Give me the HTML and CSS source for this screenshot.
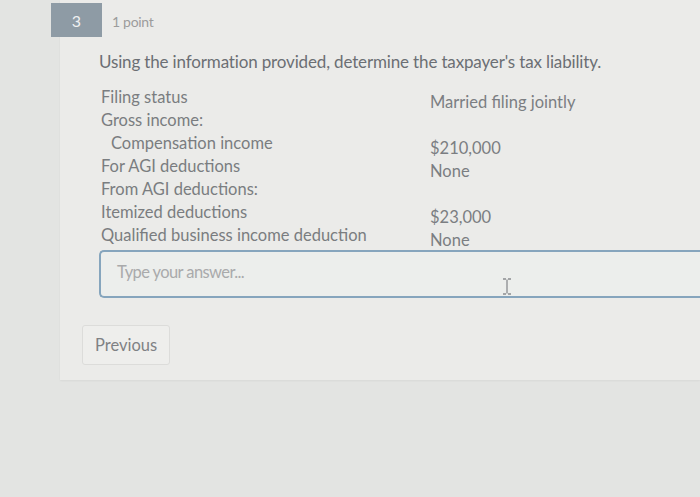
FILE: index.html
```html
<!DOCTYPE html>
<html lang="en">
<head>
<meta charset="utf-8">
<title>Question 3</title>
<link rel="stylesheet" href="styles.css">
</head>
<body>
<main class="card">
  <div class="header">
    <span class="badge">3</span>
    <span class="points">1 point</span>
  </div>
  <p class="prompt">Using the information provided, determine the taxpayer's tax liability.</p>
  <div class="details">
    <span class="label">Filing status</span><span class="value">Married filing jointly</span>
    <span class="label">Gross income:</span><span class="value"></span>
    <span class="label indent">Compensation income</span><span class="value">$210,000</span>
    <span class="label">For AGI deductions</span><span class="value">None</span>
    <span class="label">From AGI deductions:</span><span class="value"></span>
    <span class="label">Itemized deductions</span><span class="value">$23,000</span>
    <span class="label">Qualified business income deduction</span><span class="value">None</span>
  </div>
  <div class="answer">
    <span class="placeholder">Type your answer...</span>
    <svg class="ibeam" width="10" height="17" viewBox="0 0 10 17" aria-hidden="true">
      <path d="M1 1h3M6 1h3M5 1.5v14M1 16h3M6 16h3" stroke="#8a8d90" stroke-width="1.3" fill="none"/>
    </svg>
  </div>
  <button class="prev" type="button">Previous</button>
</main>
</body>
</html>
```
FILE: styles.css
```css
html, body {
  margin: 0;
  padding: 0;
}
body {
  background: #e3e4e2;
  font-family: Lato, "Open Sans", sans-serif;
  width: 700px;
  height: 497px;
  overflow: hidden;
}
.card {
  margin-left: 60px;
  width: 640px;
  background: #ebebe9;
  padding: 3px 0 15px 0;
  box-shadow: 0 1px 2px rgba(0,0,0,0.05);
}
.header {
  display: flex;
  align-items: center;
  margin-left: -9px;
}
.badge {
  width: 51px;
  height: 34px;
  background: #8e9ba5;
  color: #eef0f2;
  font-size: 16px;
  display: flex;
  align-items: center;
  justify-content: center;
}
.points {
  margin-left: 10px;
  margin-top: 3px;
  font-size: 14px;
  color: #9c9c9c;
  letter-spacing: -0.3px;
}
.prompt {
  margin: 15px 0 0 39px;
  font-size: 17px;
  line-height: 20px;
  color: #6b6f74;
  letter-spacing: -0.15px;
  white-space: nowrap;
}
.details {
  margin: 14px 0 0 41px;
  display: grid;
  grid-template-columns: 329px auto;
  grid-auto-rows: 23px;
  font-size: 16.5px;
  line-height: 23px;
  color: #7a7d80;
}
.label, .value {
  white-space: nowrap;
}
.indent {
  padding-left: 10px;
}
.value {
  padding-top: 5px;
  color: #7b7e82;
}
.answer {
  margin: 3px 0 0 39px;
  width: 599px;
  height: 44px;
  border: 2px solid #86a5bd;
  border-right: none;
  border-radius: 5px 0 0 5px;
  background: #eceeec;
  display: flex;
  align-items: flex-start;
  box-sizing: content-box;
}
.placeholder {
  flex: none;
  padding: 10px 0 0 16px;
  width: 385px;
  font-size: 16.5px;
  color: #a9aaab;
  letter-spacing: -0.6px;
  white-space: nowrap;
}
.ibeam {
  flex: none;
  margin-top: 26px;
}
.prev {
  display: block;
  margin: 27px 0 0 22px;
  width: 88px;
  height: 40px;
  border: 1px solid #dcdcda;
  border-radius: 3px;
  background: #eeeeec;
  font-family: Lato, "Open Sans", sans-serif;
  font-size: 16.5px;
  color: #7f8184;
  text-align: left;
  padding: 0 0 0 12px;
}
```
